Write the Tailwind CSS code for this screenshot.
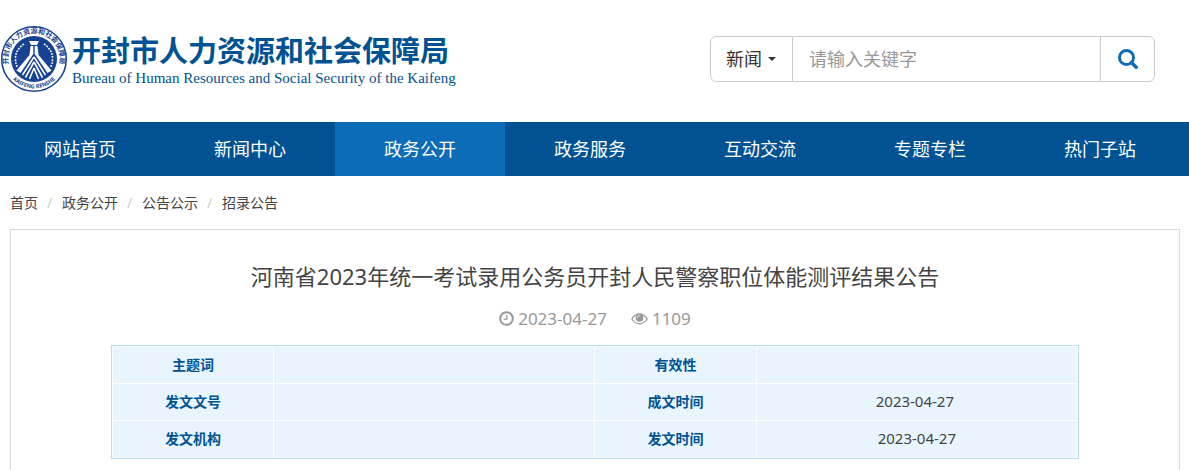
<!DOCTYPE html>
<html lang="zh-CN">

<head>
  <meta charset="UTF-8">
  <meta name="viewport" content="width=device-width, initial-scale=1.0">
  <title>开封市人力资源和社会保障局</title>
  <script src="https://cdn.jsdelivr.net/npm/@tailwindcss/browser@4"></script>
</head>

<body class="bg-white text-[#444] font-['Noto_Sans','Noto_Sans_CJK_SC',sans-serif] overflow-x-hidden">
  <!-- Header -->
  <header class="flex items-center justify-between pt-6 pb-7 pr-[34px]">
    <a href="#" class="flex items-center gap-1 text-[#005293]">
      <svg class="w-[68px] h-[70px] shrink-0" viewBox="0 0 68 70" fill="none">
        <defs>
          <path id="arcTop" d="M12.600 49.500A25.800 25.800 0 1 1 55.400 49.500" />
          <path id="arcBottom" d="M10 52A29.500 29.500 0 0 0 58 52" />
        </defs>
        <circle cx="34" cy="35" r="32.300" fill="#fff" stroke="#174291" stroke-width="1.500" />
        <circle cx="34" cy="35" r="23" fill="#174291" />
        <text font-size="7" font-weight="700" fill="#174291" text-anchor="middle">
          <textPath href="#arcTop" startOffset="50%">开封市人力资源和社会保障局</textPath>
        </text>
        <text font-size="5.500" font-weight="700" fill="#174291" text-anchor="middle">
          <textPath href="#arcBottom" startOffset="50%">KAIFENG RENSHE</textPath>
        </text>
        <!-- Tower -->
        <path fill="#fff" d="M29 17h10l-2 4h-6zM30.500 22h2.800v8L20.500 49l-4-2.500L29.500 31zM37.500 22h-2.800v8l12.800 19 4-2.500L38.500 31z" />
        <path stroke="#fff" stroke-width="1.600" d="M34 33L22.500 51M34 33l11.500 18M34 38l-8.500 15.500M34 38l8.500 15.500M34 44l-4.500 11M34 44l4.500 11" />
        <!-- Wheat ears -->
        <path stroke="#fff" stroke-width="1.600" stroke-dasharray="1.800 1.200" d="M24 20q-8.500 6-8.500 14t2.500 9M44 20q8.500 6 8.500 14t-2.500 9" />
      </svg>
      <span class="flex flex-col pt-1.5">
        <span class="text-[29px] leading-8 font-bold whitespace-nowrap">开封市人力资源和社会保障局</span>
        <span class="text-[15px] leading-[22px] font-['Liberation_Serif',serif] whitespace-nowrap">Bureau of Human Resources and Social Security of the Kaifeng</span>
      </span>
    </a>

    <!-- Search -->
    <form class="flex w-[445px] h-[46px] border border-[#ccc] rounded-md text-lg overflow-hidden">
      <button type="button" class="flex items-center justify-center gap-1.5 w-[82px] pr-px border-r border-[#ccc] text-[#333]">
        新闻
        <span class="border-x-4 border-x-transparent border-t-4 border-t-[#333]"></span>
      </button>
      <input type="text" aria-label="请输入关键字" placeholder="请输入关键字" class="flex-1 min-w-0 px-4 placeholder:text-[#999] outline-none">
      <button type="submit" aria-label="搜索" class="flex items-center justify-center w-[54px] border-l border-[#ccc] text-[#0d6cb8]">
        <svg class="w-5 h-5" viewBox="0 0 20 20" fill="none" stroke="currentColor">
          <circle cx="8.500" cy="8.500" r="7" stroke-width="3" />
          <path stroke-width="3.500" stroke-linecap="round" d="M13.500 13.500l4.700 4.700" />
        </svg>
      </button>
    </form>
  </header>

  <!-- Main navigation -->
  <nav class="bg-[#005293]">
    <div class="grid grid-cols-7 -ml-[5px] mr-1 text-lg leading-[54px] text-white text-center">
      <a href="#">网站首页</a>
      <a href="#">新闻中心</a>
      <a href="#" class="bg-[#0d6cb8]">政务公开</a>
      <a href="#">政务服务</a>
      <a href="#">互动交流</a>
      <a href="#">专题专栏</a>
      <a href="#">热门子站</a>
    </div>
  </nav>

  <!-- Breadcrumb -->
  <div class="flex gap-[9px] px-[10px] text-sm leading-[53px]">
    <a href="#">首页</a>
    <span class="w-1.5 text-[#ccc]">/</span>
    <a href="#">政务公开</a>
    <span class="w-1.5 text-[#ccc]">/</span>
    <a href="#">公告公示</a>
    <span class="w-1.5 text-[#ccc]">/</span>
    <a href="#">招录公告</a>
  </div>

  <!-- Article -->
  <main class="ml-[10px] mr-[9px] px-[100px] pt-[30px] pb-8 border border-[#d8d8d8]">
    <h1 class="text-[22px] leading-8 text-center">河南省2023年统一考试录用公务员开封人民警察职位体能测评结果公告</h1>
    <div class="flex justify-center gap-6 my-[13px] text-[17px] leading-[27px] text-[#999]">
      <span class="flex items-center gap-1">
        <svg class="w-[15px] h-[15px]" viewBox="0 0 14 14" fill="none" stroke="currentColor">
          <circle cx="7" cy="7" r="5.900" stroke-width="1.900" />
          <path stroke-width="1.200" d="M7.300 3.600v4H4.500" />
        </svg>
        2023-04-27
      </span>
      <span class="flex items-center gap-1">
        <svg class="w-[17px] h-[15px]" viewBox="0 0 17 14" fill="none" stroke="currentColor">
          <path stroke-width="1.300" d="M.8 7.500Q4 2.300 8.500 2.300t7.700 5.200Q13 12.300 8.500 12.300T.8 7.500z" />
          <circle cx="8.500" cy="6.300" r="3.900" fill="currentColor" stroke="none" />
          <path stroke="#fff" stroke-width=".8" stroke-linecap="round" d="M6.300 6.200q0-2.100 2.100-2.200" />
        </svg>
        1109
      </span>
    </div>

    <table class="w-full table-fixed border border-[#b3e0f7] border-separate border-spacing-px text-[15px] text-center">
      <colgroup>
        <col class="w-1/6">
        <col class="w-1/3">
        <col class="w-1/6">
        <col class="w-1/3">
      </colgroup>
      <tbody>
        <tr class="h-9 bg-[#e8f5fe]">
          <th class="text-sm font-bold text-[#005293]">主题词</th>
          <td></td>
          <th class="text-sm font-bold text-[#005293]">有效性</th>
          <td></td>
        </tr>
        <tr class="h-9 bg-[#e8f5fe]">
          <th class="text-sm font-bold text-[#005293]">发文文号</th>
          <td></td>
          <th class="text-sm font-bold text-[#005293]">成文时间</th>
          <td class="pb-0.5">2023-04-27&nbsp;</td>
        </tr>
        <tr class="h-9 bg-[#e8f5fe]">
          <th class="text-sm font-bold text-[#005293]">发文机构</th>
          <td></td>
          <th class="text-sm font-bold text-[#005293]">发文时间</th>
          <td class="pb-0.5">2023-04-27</td>
        </tr>
      </tbody>
    </table>
  </main>
</body>

</html>
